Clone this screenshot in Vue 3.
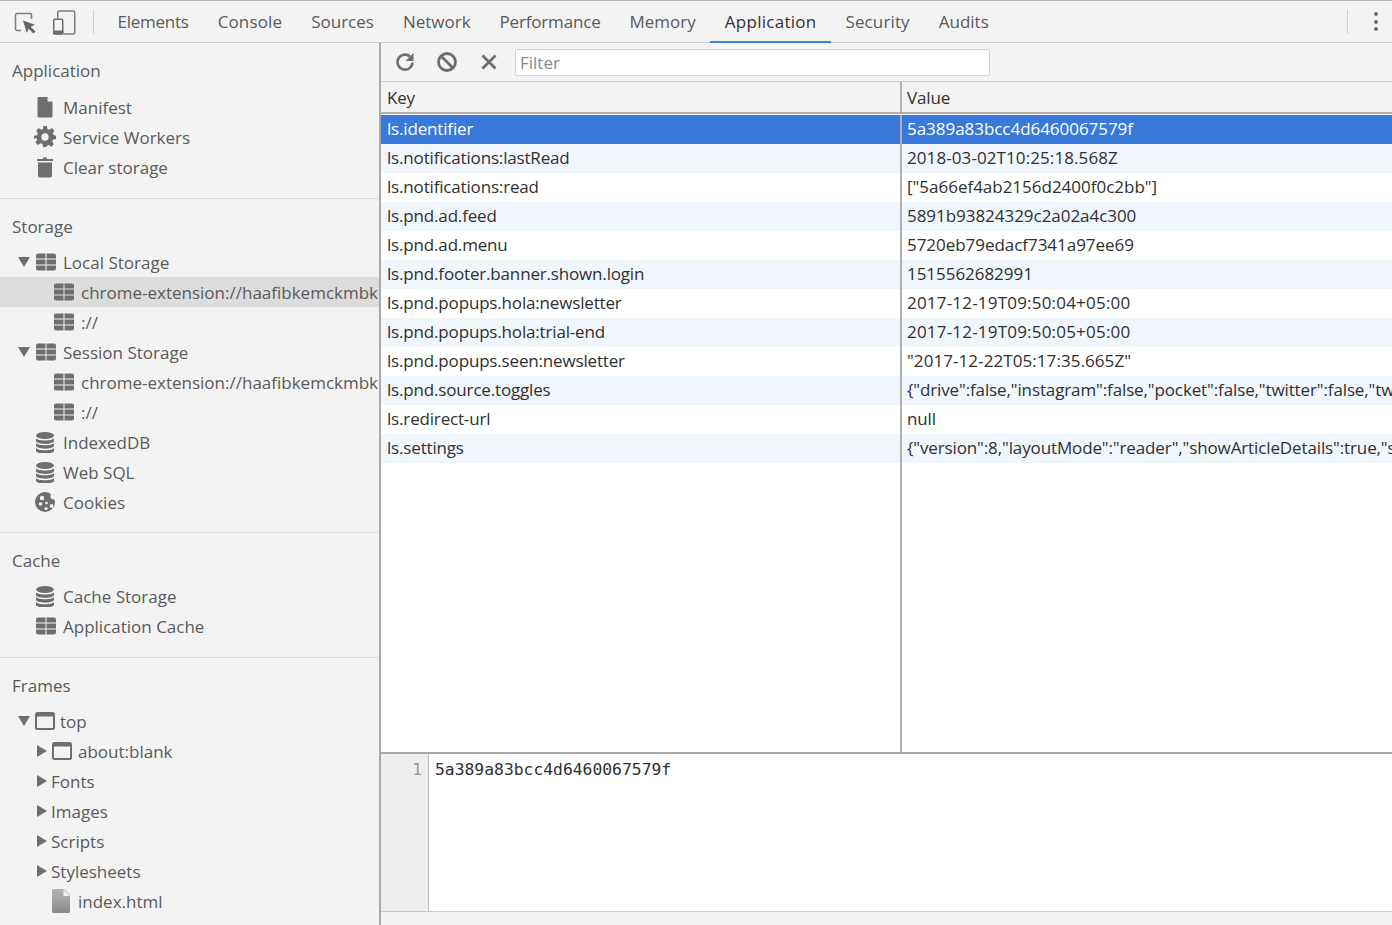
<script setup>
const tabs = [['Elements',-0.25],['Console',0.14],['Sources',0],['Network',0],['Performance',-0.18],['Memory',0],['Application',0.27],['Security',0.12],['Audits',0]]
const rows = [
  ['ls.identifier','5a389a83bcc4d6460067579f',-0.04],
  ['ls.notifications:lastRead','2018-03-02T10:25:18.568Z',0.09],
  ['ls.notifications:read','["5a66ef4ab2156d2400f0c2bb"]',-0.01],
  ['ls.pnd.ad.feed','5891b93824329c2a02a4c300',-0.04],
  ['ls.pnd.ad.menu','5720eb79edacf7341a97ee69',-0.04],
  ['ls.pnd.footer.banner.shown.login','1515562682991',-0.04],
  ['ls.pnd.popups.hola:newsletter','2017-12-19T09:50:04+05:00',0.2],
  ['ls.pnd.popups.hola:trial-end','2017-12-19T09:50:05+05:00',0.2],
  ['ls.pnd.popups.seen:newsletter','"2017-12-22T05:17:35.665Z"',0.07],
  ['ls.pnd.source.toggles','{"drive":false,"instagram":false,"pocket":false,"twitter":false,"twitterTimeline":false}',-0.12],
  ['ls.redirect-url','null',-0.12],
  ['ls.settings','{"version":8,"layoutMode":"reader","showArticleDetails":true,"sidebarOpen":false}',-0.12],
]
const sections = [
  { title:'Application', cls:'s1', items:[
    {label:'Manifest',icon:'file',indent:0},
    {label:'Service Workers',icon:'gear',indent:0},
    {label:'Clear storage',icon:'trash',indent:0},
  ]},
  { title:'Storage', cls:'s2', items:[
    {label:'Local Storage',icon:'grid',indent:0,arrow:'down'},
    {label:'chrome-extension://haafibkemckmbk',icon:'grid',indent:1,selected:true},
    {label:'://',icon:'grid',indent:1},
    {label:'Session Storage',icon:'grid',indent:0,arrow:'down'},
    {label:'chrome-extension://haafibkemckmbk',icon:'grid',indent:1},
    {label:'://',icon:'grid',indent:1},
    {label:'IndexedDB',icon:'db',indent:0},
    {label:'Web SQL',icon:'db',indent:0},
    {label:'Cookies',icon:'cookie',indent:0},
  ]},
  { title:'Cache', cls:'s3', items:[
    {label:'Cache Storage',icon:'db',indent:0},
    {label:'Application Cache',icon:'grid',indent:0},
  ]},
  { title:'Frames', cls:'s4', items:[
    {label:'top',icon:'frame',indent:0,arrow:'down',tight:true},
    {label:'about:blank',icon:'frame',indent:1,arrow:'right',tight:true},
    {label:'Fonts',indent:1,arrow:'right',noicon:true},
    {label:'Images',indent:1,arrow:'right',noicon:true},
    {label:'Scripts',indent:1,arrow:'right',noicon:true},
    {label:'Stylesheets',indent:1,arrow:'right',noicon:true},
    {label:'index.html',icon:'page',indent:1,tight:true,leaf:true},
  ]},
]
</script>

<template>
  <div class="app">
    <header class="topbar">
      <button class="tool first" aria-label="Select element">
        <svg width="22" height="24" viewBox="0 0 22 24">
          <path d="M7 20.500H3A1.500 1.500 0 0 1 1.500 19V5A1.500 1.500 0 0 1 3 3.500h13A1.500 1.500 0 0 1 17.500 5V9" fill="none" stroke="#7d7d7d" stroke-width="1.500"/>
          <path d="M9 10.500l12 4.300-4.300 1.900 4.800 4.800-2 2-4.800-4.800-1.900 4.300z" fill="#666"/>
        </svg>
      </button>
      <button class="tool second" aria-label="Toggle device">
        <svg width="24" height="26" viewBox="0 0 24 26">
          <path d="M5.750 9.500V3.500A1.500 1.500 0 0 1 7.250 2h14A1.500 1.500 0 0 1 22.750 3.500v20A1.500 1.500 0 0 1 21.250 25H11.500" fill="none" stroke="#7d7d7d" stroke-width="1.500"/>
          <rect x="1.750" y="10.250" width="9" height="14.750" rx="1.200" fill="none" stroke="#6e6e6e" stroke-width="1.500"/>
          <rect x="1" y="21.500" width="10.500" height="4" rx="1" fill="#6e6e6e"/>
        </svg>
      </button>
      <span class="vsep"></span>
      <nav class="tabs">
        <span v-for="t in tabs" :key="t[0]" class="tab" :class="{active:t[0]==='Application'}" :style="{letterSpacing:t[1]+'px'}">{{ t[0] }}</span>
      </nav>
      <span class="vsep right"></span>
      <span class="dots"><i></i><i></i><i></i></span>
    </header>

    <div class="main">
      <aside class="sidebar">
        <section v-for="s in sections" :key="s.title" class="section" :class="s.cls">
          <h3 class="heading">{{ s.title }}</h3>
          <div v-for="(it,i) in s.items" :key="i" class="item" :class="{selected:it.selected, ind:it.indent, tight:it.tight, noicon:it.noicon, leaf:it.leaf, sub:it.arrow==='right'}">
            <span class="arrow" :class="it.arrow"></span>
            <span v-if="!it.noicon" class="icon">
              <svg v-if="it.icon==='file'" width="22" height="22" viewBox="0 0 22 22"><path d="M3.500 2.500A1.500 1.500 0 0 1 5 1h8.500l5 5v14a1.500 1.500 0 0 1-1.500 1.500H5A1.500 1.500 0 0 1 3.500 20z" fill="#6e6e6e"/><path d="M13.500 1v4.500H18.500z" fill="#f3f3f3"/></svg>
              <svg v-else-if="it.icon==='page'" width="22" height="26" viewBox="0 0 22 26"><defs><linearGradient id="pg" x1="0" y1="0" x2="0" y2="1"><stop offset="0" stop-color="#b5b5b5"/><stop offset="1" stop-color="#8a8a8a"/></linearGradient></defs><path d="M2 2.500A1.500 1.500 0 0 1 3.500 1H14l6 6v16.500a1.500 1.500 0 0 1-1.500 1.500h-15A1.500 1.500 0 0 1 2 23.500z" fill="url(#pg)"/><path d="M13.500 1.500V8H20z" fill="#f3f3f3"/></svg>
              <svg v-else-if="it.icon==='gear'" width="22" height="22" viewBox="0 0 24 24"><path fill="#6e6e6e" fill-rule="evenodd" d="M10 1h4l.7 3.300 2 .8L19.500 3.300l2.800 2.800-1.800 2.800.8 2L24 11.700v3.600l-3.300.7-.8 2 1.800 2.800-2.800 2.800-2.800-1.800-2 .8L13.500 24h-3.600l-.7-3.300-2-.8-2.800 1.800-2.800-2.800 1.800-2.800-.8-2L0 15.300v-3.600l3.300-.7.8-2L2.300 6.100l2.800-2.800 2.800 1.800 2-.8zM12 9a4 4 0 1 0 0 8 4 4 0 0 0 0-8z" transform="translate(0 -1)"/></svg>
              <svg v-else-if="it.icon==='trash'" width="22" height="22" viewBox="0 0 22 22"><path fill="#6e6e6e" d="M3 3h6V1.500h4V3h6v2H3zM4 6.500h14V19.500A2 2 0 0 1 16 21.500H6A2 2 0 0 1 4 19.500z"/></svg>
              <svg v-else-if="it.icon==='grid'" width="22" height="22" viewBox="0 0 22 22"><path fill="#6e6e6e" d="M2 4.500A2 2 0 0 1 4 2.500h7.500v5H2zM12.500 2.500H20a2 2 0 0 1 2 2v3h-9.500zM2 8.500h9.500v5H2zM12.500 8.500H22v5h-9.500zM2 14.500h9.500v5H4a2 2 0 0 1-2-2zM12.500 14.500H22v3a2 2 0 0 1-2 2h-7.500z"/></svg>
              <svg v-else-if="it.icon==='db'" width="22" height="22" viewBox="0 0 22 22"><g fill="#6e6e6e"><ellipse cx="11" cy="4.500" rx="9" ry="3.500"/><path d="M2 6.500c1.500 3 16.500 3 18 0v3c-1.500 3.500-16.500 3.500-18 0z" transform="translate(0 .8)"/><path d="M2 6.500c1.500 3 16.500 3 18 0v3c-1.500 3.500-16.500 3.500-18 0z" transform="translate(0 5.600)"/><path d="M2 6.500c1.500 3 16.500 3 18 0v3c-1.500 3.500-16.500 3.500-18 0z" transform="translate(0 10.400)"/></g></svg>
              <svg v-else-if="it.icon==='cookie'" width="22" height="22" viewBox="0 0 22 22"><circle cx="11" cy="11" r="10" fill="#6e6e6e"/><circle cx="8" cy="7" r="2.200" fill="#f3f3f3"/><circle cx="6.500" cy="13" r="1.800" fill="#f3f3f3"/><circle cx="12.500" cy="12" r="1.300" fill="#f3f3f3"/><circle cx="12" cy="17.500" r="1.600" fill="#f3f3f3"/><circle cx="17.500" cy="15" r="1.900" fill="#f3f3f3"/><circle cx="20" cy="5" r="3.500" fill="#f3f3f3"/></svg>
              <svg v-else-if="it.icon==='frame'" width="22" height="20" viewBox="0 0 22 20"><rect x="2" y="2" width="18" height="16" rx="1.500" fill="none" stroke="#6e6e6e" stroke-width="2"/><rect x="2" y="2" width="18" height="3.500" fill="#6e6e6e"/></svg>
            </span>
            <span class="label">{{ it.label }}</span>
          </div>
        </section>
      </aside>

      <main class="panel">
        <div class="filterbar">
          <svg class="fbicon refresh" width="22" height="22" viewBox="0 0 22 22"><path d="M18.500 11.500A7.500 7.500 0 1 1 16 5.500" fill="none" stroke="#6e6e6e" stroke-width="2.600"/><path d="M19.500 2v8h-8z" fill="#6e6e6e"/></svg>
          <svg class="fbicon block" width="22" height="22" viewBox="0 0 22 22"><circle cx="11" cy="11" r="8.500" fill="none" stroke="#6e6e6e" stroke-width="2.800"/><path d="M5 5l12 12" stroke="#6e6e6e" stroke-width="2.800"/></svg>
          <svg class="fbicon cross" width="20" height="20" viewBox="0 0 20 20"><path d="M3.500 3.500l13 13M16.500 3.500l-13 13" stroke="#6e6e6e" stroke-width="2.800"/></svg>
          <div class="filter">Filter</div>
        </div>
        <div class="thead">
          <span class="cell">Key</span><span class="cell val">Value</span>
        </div>
        <div class="tbody">
          <div v-for="(r,i) in rows" :key="r[0]" class="row" :class="{sel:i===0, alt:i%2===1}">
            <span class="cell">{{ r[0] }}</span><span class="cell val" :style="{letterSpacing:r[2]+'px'}">{{ r[1] }}</span>
          </div>
          <div class="filler"><span></span><span class="val"></span></div>
        </div>
        <div class="editor">
          <div class="gutter">1</div>
          <div class="code">5a389a83bcc4d6460067579f</div>
        </div>
        <div class="status"></div>
      </main>
    </div>
  </div>
</template>

<style>
html, body { margin: 0; height: 100%; overflow: hidden; }
</style>

<style scoped>
.app {
  width: 1392px; height: 925px; display: flex; flex-direction: column; overflow: hidden;
  font-family: "Open Sans", "Noto Sans", sans-serif; font-size: 17px;
  background: #f3f3f3; color: #303030;
}
.topbar {
  height: 41px; flex: none; display: flex; align-items: center; position: relative;
  border-top: 1px solid #b4b4b4; border-bottom: 1px solid #cccccc; background: #f3f3f3;
}
.tool { border: 0; background: none; padding: 0; display: flex; }
.first { margin-left: 14px; }
.second { margin-left: 16px; }
.vsep { width: 1px; height: 24px; background: #cfcfcf; margin-left: 17px; }
.vsep.right { margin-left: auto; }
.tabs { display: flex; align-self: stretch; margin-left: 9px; }
.tab {
  padding: 0 14.500px; display: flex; align-items: center; color: #5a5a5a; position: relative;
}
.tab.active { color: #333; }
.tab.active::after {
  content: ""; position: absolute; left: 0; right: 0; bottom: -1px; height: 2px; background: #3b82e6;
}
.dots { display: flex; flex-direction: column; gap: 3.500px; margin: 0 14px 0 26px; }
.dots i { width: 4px; height: 4px; border-radius: 50%; background: #6e6e6e; display: block; }

.main { flex: 1; min-height: 0; display: flex; }
.sidebar {
  width: 379px; flex: none; border-right: 2px solid #a8a8a8; background: #f3f3f3; overflow: hidden;
}
.section { border-bottom: 1px solid #dcdcdc; }
.section:last-child { border-bottom: 0; }
.heading {
  margin: 0; padding-left: 12px; height: 28px; line-height: 28px; font-weight: 400; font-size: 17px; color: #5a5a5a;
}
.s1 { padding: 14px 0 16px; }
.s2 { padding: 14px 0 15px; }
.s3 { padding: 14px 0 16px; }
.s4 { padding: 14px 0 0; }
.s1 .heading { margin-bottom: 7px; }
.s2 .heading, .s3 .heading, .s4 .heading { margin-bottom: 6px; }
.item {
  height: 30px; display: flex; align-items: center; color: #5a5a5a; white-space: nowrap; overflow: hidden;
  padding-left: 18px;
}
.item.ind { padding-left: 36px; }
.item.sub { padding-left: 37px; }
.arrow { width: 16px; flex: none; display: flex; align-items: center; }
.arrow.down::before {
  content: ""; border-left: 6px solid transparent; border-right: 6px solid transparent; border-top: 10px solid #6e6e6e;
}
.arrow.right::before {
  content: ""; border-top: 6px solid transparent; border-bottom: 6px solid transparent; border-left: 10px solid #6e6e6e;
}
.icon { width: 22px; flex: none; display: flex; align-items: center; justify-content: center; margin-right: 7px; }
.item.tight .icon { margin-right: 4px; }
.item.ind.tight .arrow { width: 14px; }
.item.ind.tight .icon { margin-right: 5px; }
.item.noicon .arrow { width: 14px; }
.item.leaf .arrow { width: 13px; }
.item.ind.leaf .icon { margin-right: 6px; }
.item.selected { background: #dcdcdc; }
.label { flex: none; }

.panel { flex: 1; min-width: 0; display: flex; flex-direction: column; background: #fff; }
.filterbar {
  height: 38px; flex: none; display: flex; align-items: center; background: #f3f3f3; border-bottom: 1px solid #cccccc;
}
.fbicon { flex: none; }
.refresh { margin-left: 13px; }
.block { margin-left: 20px; }
.cross { margin-left: 21px; }
.filter {
  margin-left: 16px; width: 475px; height: 27px; line-height: 25px; padding-left: 4px; box-sizing: border-box;
  background: #fff; border: 1px solid #d4d4d4; border-radius: 2px; color: #8a8a8a;
}
.thead {
  height: 30px; flex: none; display: grid; grid-template-columns: 519px 1fr; background: #f3f3f3; align-items: stretch;
  border-bottom: 2px solid #b0b0b0;
}
.cell { padding-left: 6px; line-height: 27px; white-space: nowrap; overflow: hidden; color: #303030; letter-spacing: -0.17px; }
.thead .cell { line-height: 31px; }
.val { border-left: 2px solid #b0b0b0; padding-left: 5px; letter-spacing: -0.12px; }
.tbody { flex: 1; min-height: 0; display: flex; flex-direction: column; padding-top: 1px; }
.row { height: 29px; flex: none; display: grid; grid-template-columns: 519px 1fr; }
.row.alt { background: #f1f6fd; }
.row.sel { background: #3879d9; }
.row.sel .cell { color: #fff; }
.filler { flex: 1; display: grid; grid-template-columns: 519px 1fr; }
.editor {
  height: 157px; flex: none; display: flex; border-top: 2px solid #a8a8a8; border-bottom: 1px solid #cccccc; background: #fff;
}
.gutter {
  width: 48px; flex: none; box-sizing: border-box; background: #eeeeee; border-right: 1px solid #bbbbbb; text-align: right; padding-right: 6px;
  font-family: "DejaVu Sans Mono", monospace; font-size: 16.350px; line-height: 31px; color: #999;
}
.code {
  padding-left: 6px; font-family: "DejaVu Sans Mono", monospace; font-size: 16.350px; line-height: 31px; color: #303030;
}
.status { height: 13px; flex: none; background: #f3f3f3; }
</style>
